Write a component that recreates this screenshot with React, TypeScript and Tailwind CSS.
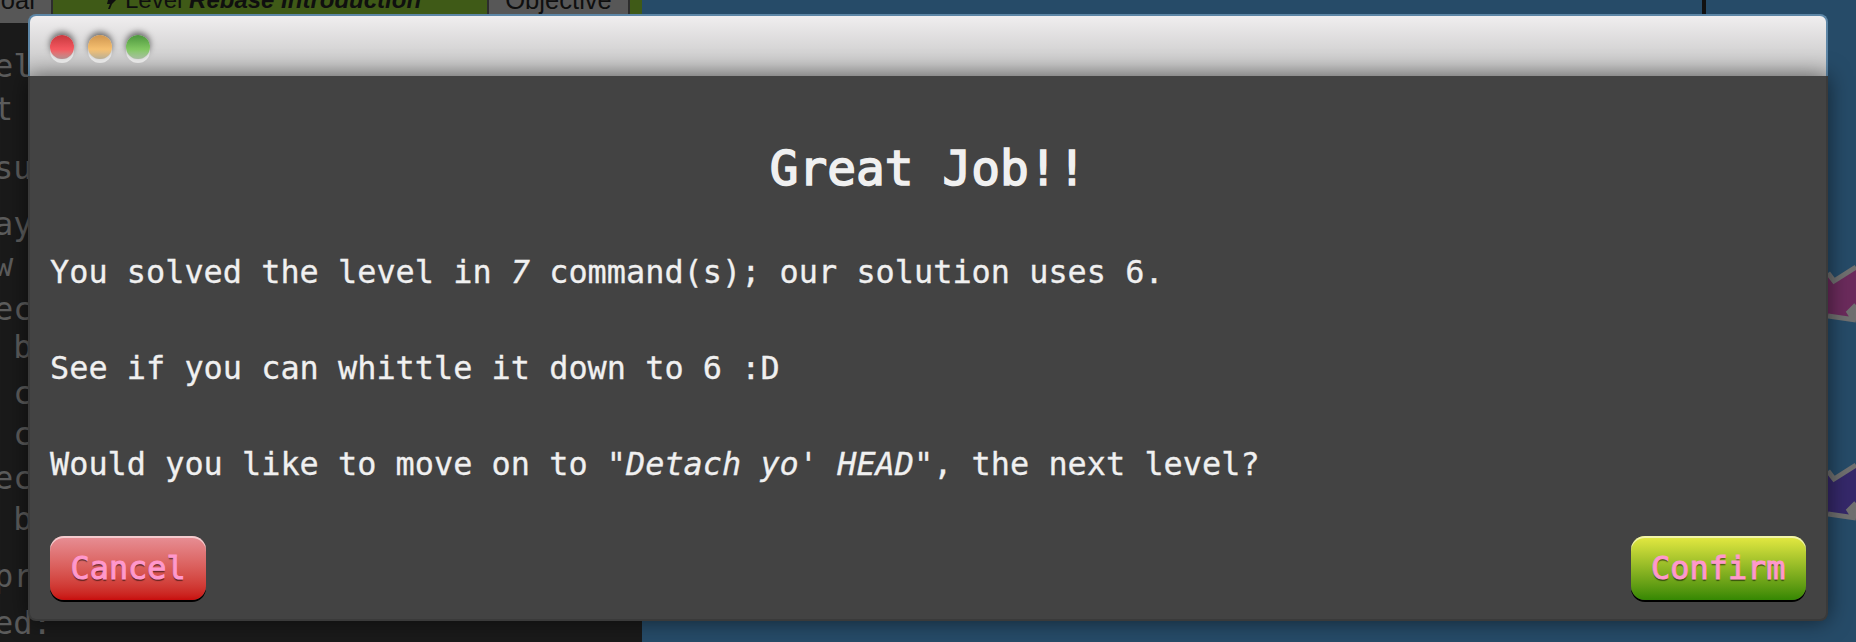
import React from "react";

const mono = "font-['DejaVu_Sans_Mono','Liberation_Mono',monospace]";

const terminalLines = [
  { text: "el", top: "mt-[22px]" },
  { text: "t", top: "mt-[0px]" },
  { text: "su", top: "mt-[16px]" },
  { text: "ay", top: "mt-[13px]" },
  { text: "w", top: "mt-[-2px]" },
  { text: "ec", top: "mt-[1px]" },
  { text: " b", top: "mt-[-5px]" },
  { text: " c", top: "mt-[3px]" },
  { text: " c", top: "mt-[-2px]" },
  { text: "ec", top: "mt-[1px]" },
  { text: " b", top: "mt-[-2px]" },
  { text: "pr", top: "mt-[14px]" },
  { text: "ed:", top: "mt-[4px]" },
];

function TrafficLight({ color }: { color: string }) {
  return (
    <div
      className={`h-6 w-6 rounded-full shadow-[0_-3px_6px_rgba(0,0,0,0.55),0_4px_0_#f4f4f4] ${color}`}
    />
  );
}

function Arrow({ fill, y }: { fill: string; y: number }) {
  return (
    <g transform={`translate(0 ${y})`}>
      <path d="M0 6 L6 14 L28 0 L28 38 L21 45 L25 51 L0 48 Z" fill={fill} />
      <path d="M28 38 L21 45 L25 51 L28 51 Z" fill="#707070" />
      <path
        d="M0 6 L6 14 L28 0 M0 49 L28 53 M28 38 L21 45 L25 51"
        fill="none"
        stroke="#707070"
        strokeWidth="5"
      />
    </g>
  );
}

function ModalButton({ label, color }: { label: string; color: string }) {
  return (
    <button
      className={`h-[64px] rounded-[14px] px-[20.5px] pt-[2px] text-[31.9px] leading-none text-[#ff98cc] [-webkit-text-stroke:1px] [text-shadow:0_2px_1px_rgba(0,0,0,0.5)] shadow-[0_2px_0_#000,inset_0_2px_0_rgba(255,255,255,0.55)] ${mono} ${color}`}
    >
      {label}
    </button>
  );
}

export default function App() {
  return (
    <div className="relative flex h-[642px] w-[1856px] overflow-hidden bg-[#264b68]">
      <div className="flex h-full w-[642px] flex-col overflow-hidden bg-[#1a1a1a]">
        <div className="flex h-[23px] items-start bg-[#3f5a17] font-['Liberation_Sans',sans-serif] text-[25.6px] leading-[30px] text-[#0f0f0f]">
          <div className="flex h-[23px] w-[53px] justify-end overflow-hidden border-r-2 border-[#2d2d2d] bg-[#575757] pr-4 whitespace-nowrap">
            <span className="-mt-[15px]">Goal</span>
          </div>
          <div className="flex h-[23px] w-[434px] overflow-hidden pl-[52px] text-[24px] whitespace-nowrap">
            <svg className="h-[9px] w-[12px] shrink-0" viewBox="0 0 12 9">
              <path d="M3 0 H11 L7 4 L5 9 H3 L5 4 H2 Z" fill="#0f0f0f" />
            </svg>
            <span className="-mt-[15px] ml-[8px]">
              Level <b className="italic">Rebase Introduction</b>
            </span>
          </div>
          <div className="flex h-[23px] w-[143px] justify-center overflow-hidden border-x-2 border-[#2d2d2d] bg-[#575757] whitespace-nowrap">
            <span className="-mt-[15px]">Objective</span>
          </div>
        </div>
        <div className="h-[21px] bg-[#3f5a17]" />
        <div className={`-ml-[6px] text-[32px] leading-[43px] whitespace-pre text-[#5c5c5c] ${mono}`}>
          {terminalLines.map((line, i) => (
            <div key={i} className={line.top}>
              {line.text}
            </div>
          ))}
        </div>
      </div>

      <div className="relative flex-1">
        <div className="absolute top-0 left-[1060px] h-[14px] w-[4px] bg-[#111]" />
        <svg className="absolute top-0 left-[1186px] h-[642px] w-[28px]" viewBox="0 0 28 642">
          <Arrow fill="#6b2b5c" y={267} />
          <Arrow fill="#35286a" y={465} />
        </svg>
      </div>

      <div className="absolute top-[14px] left-[28px] flex h-[607px] w-[1800px] flex-col">
        <div className="flex h-[62px] shrink-0 items-center gap-[14px] rounded-t-[8px] border-2 border-b-0 border-[#5d86a6] bg-gradient-to-b from-[#f0eeef] to-[#c2c2c2] pt-[2px] pl-[20px]">
          <TrafficLight color="bg-gradient-to-b from-[#c8383e] via-[#f55860] via-60% to-[#bb9294]" />
          <TrafficLight color="bg-gradient-to-b from-[#cf9650] via-[#f6c070] via-60% to-[#bfb498]" />
          <TrafficLight color="bg-gradient-to-b from-[#4c963e] via-[#82c862] via-60% to-[#acc4a4]" />
        </div>
        <div className="flex flex-1 flex-col justify-between rounded-b-[8px] border-2 border-t-0 border-[#3a3a3a] bg-[#434343] px-[20px] pb-[19px] shadow-[0_0_22px_rgba(0,0,0,0.55)]">
          <div className={`text-[31.9px] text-[#f0f0f0] [-webkit-text-stroke:0.3px] ${mono}`}>
            <h1 className="mt-[61px] mb-[47px] text-center text-[47.8px] leading-[64px] font-normal [-webkit-text-stroke:1.6px]">
              Great Job!!
            </h1>
            <p className="mb-[48px] leading-[48px] whitespace-pre">
              You solved the level in <em>7</em> command(s); our solution uses 6.
            </p>
            <p className="mb-[48px] leading-[48px] whitespace-pre">
              See if you can whittle it down to 6 :D
            </p>
            <p className="leading-[48px] whitespace-pre">
              Would you like to move on to <em>"Detach yo' HEAD"</em>, the next level?
            </p>
          </div>
          <div className="flex items-start justify-between">
            <ModalButton label="Cancel" color="bg-gradient-to-b from-[#e78f96] to-[#c80c0c]" />
            <ModalButton label="Confirm" color="bg-gradient-to-b from-[#e6ea42] to-[#348703]" />
          </div>
        </div>
      </div>
    </div>
  );
}
